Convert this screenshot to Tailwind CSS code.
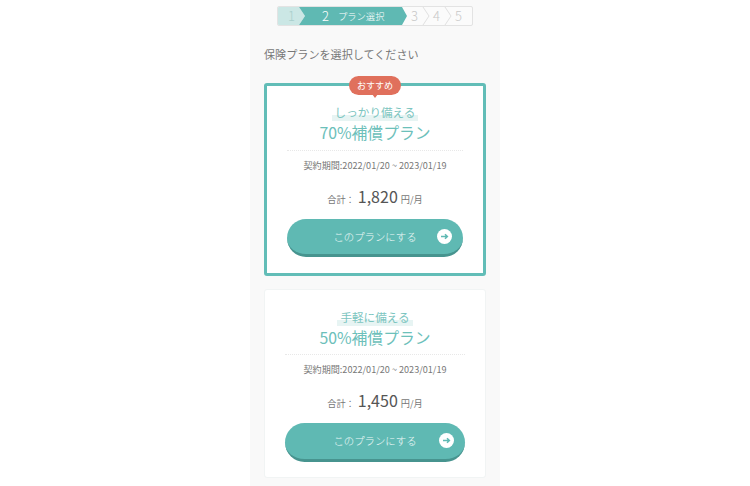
<!DOCTYPE html>
<html lang="ja">
<head>
    <meta charset="UTF-8">
    <title>プラン選択</title>
    <script src="https://cdn.jsdelivr.net/npm/@tailwindcss/browser@4"></script>
</head>
<body class="bg-white h-[486px] overflow-hidden font-['Noto_Sans_CJK_JP','Noto_Sans',sans-serif] font-normal text-[#555]">
    <div class="w-[250px] h-[486px] mx-auto bg-[#f9f9f9] px-[14px] pt-[6px]">

        <!-- steps -->
        <div class="relative flex w-[196px] h-[20px] mx-auto border border-[#e3e3e3] rounded-[2px] overflow-hidden bg-[#fbfbfb] text-[13px] leading-[18px] text-[#c8c8c8] font-light">
            <div class="w-[27px] bg-[#cbe7e5] text-[#a9cfcc] pl-[10px] shrink-0 [clip-path:polygon(0_0,21px_0,100%_50%,21px_100%,0_100%)]">1</div>
            <div class="w-[108px] -ml-[6px] bg-[#5fb9b3] text-white flex items-center shrink-0 pl-[23px] [clip-path:polygon(0_0,103px_0,100%_50%,103px_100%,0_100%,6px_50%)]">
                <span class="text-[13px]">2</span>
                <span class="text-[9.3px] ml-[9px]">プラン選択</span>
            </div>
            <div class="w-[22px] pl-[4px] shrink-0">3</div>
            <div class="w-[22px] pl-[4px] shrink-0">4</div>
            <div class="w-[22px] pl-[4px] shrink-0">5</div>
            <svg class="absolute left-[144px] top-0" width="8" height="18" fill="none" stroke="#e0e0e0"><path d="M1 0l6 9-6 9"/></svg>
            <svg class="absolute left-[166px] top-0" width="8" height="18" fill="none" stroke="#e0e0e0"><path d="M1 0l6 9-6 9"/></svg>
        </div>

        <p class="text-[11.1px] leading-[16px] mt-[20px] text-[#777]">保険プランを選択してください</p>

        <!-- 70% plan -->
        <div class="relative mt-[21px] h-[193px] bg-white border-[3px] border-[#62bdb7] rounded-[3px] flex flex-col items-center">
            <div class="absolute -top-[10px] left-1/2 -translate-x-1/2 w-[52px] h-[19px] rounded-full bg-[#e0705c] text-white text-[9px] leading-[19px] text-center">おすすめ
                <span class="absolute left-1/2 -translate-x-1/2 -bottom-[3px] w-0 h-0 border-x-[3px] border-x-transparent border-t-[4px] border-t-[#e0705c]"></span>
            </div>
            <p class="mt-[17px] px-[3px] text-[11.6px] leading-[18px] text-[#7cc5c0] bg-[linear-gradient(transparent_68%,#e7f4f3_68%)]">しっかり備える</p>
            <p class="text-[15.8px] leading-[23px] text-[#6cc0ba]">70%補償プラン</p>
            <div class="w-[176px] mt-[6px] border-t border-dotted border-[#e8e8e8]"></div>
            <p class="mt-[6px] text-[9.1px] leading-[16px] text-[#777]">契約期間:2022/01/20 ~ 2023/01/19</p>
            <p class="mt-[11px] flex items-baseline h-[24px]">
                <span class="text-[9.2px] mr-[3px] text-[#777]">合計：</span>
                <span class="text-[16px] text-[#555]">1,820</span>
                <span class="text-[9.2px] ml-[3px] text-[#777]">円/月</span>
            </p>
            <button class="relative mt-[11px] w-[176px] h-[38px] rounded-full bg-[#5fb9b3] border-b-[3px] border-[#47948f] text-white/90 text-[10.4px] font-light">このプランにする
                <svg class="absolute right-[11px] top-[10px]" width="15" height="15" viewBox="0 0 15 15"><circle cx="7.5" cy="7.5" r="7.5" fill="#fff"/><path d="M4 7.5h6M8 5.2l2.4 2.3L8 9.8" fill="none" stroke="#5fb9b3" stroke-width="1.5"/></svg>
            </button>
        </div>

        <!-- 50% plan -->
        <div class="mt-[13px] h-[189px] bg-white border border-[#f1f4f4] rounded-[3px] flex flex-col items-center">
            <p class="mt-[18px] px-[3px] text-[11.6px] leading-[18px] text-[#7cc5c0] bg-[linear-gradient(transparent_68%,#e7f4f3_68%)]">手軽に備える</p>
            <p class="text-[15.8px] leading-[23px] text-[#6cc0ba]">50%補償プラン</p>
            <div class="w-[180px] mt-[5px] border-t border-dotted border-[#e8e8e8]"></div>
            <p class="mt-[6px] text-[9.1px] leading-[16px] text-[#777]">契約期間:2022/01/20 ~ 2023/01/19</p>
            <p class="mt-[11px] flex items-baseline h-[24px]">
                <span class="text-[9.2px] mr-[3px] text-[#777]">合計：</span>
                <span class="text-[16px] text-[#555]">1,450</span>
                <span class="text-[9.2px] ml-[3px] text-[#777]">円/月</span>
            </p>
            <button class="relative mt-[11px] w-[180px] h-[39px] rounded-full bg-[#5fb9b3] border-b-[3px] border-[#47948f] text-white/90 text-[10.4px] font-light">このプランにする
                <svg class="absolute right-[11px] top-[10px]" width="15" height="15" viewBox="0 0 15 15"><circle cx="7.5" cy="7.5" r="7.5" fill="#fff"/><path d="M4 7.5h6M8 5.2l2.4 2.3L8 9.8" fill="none" stroke="#5fb9b3" stroke-width="1.5"/></svg>
            </button>
        </div>
    </div>
</body>
</html>
